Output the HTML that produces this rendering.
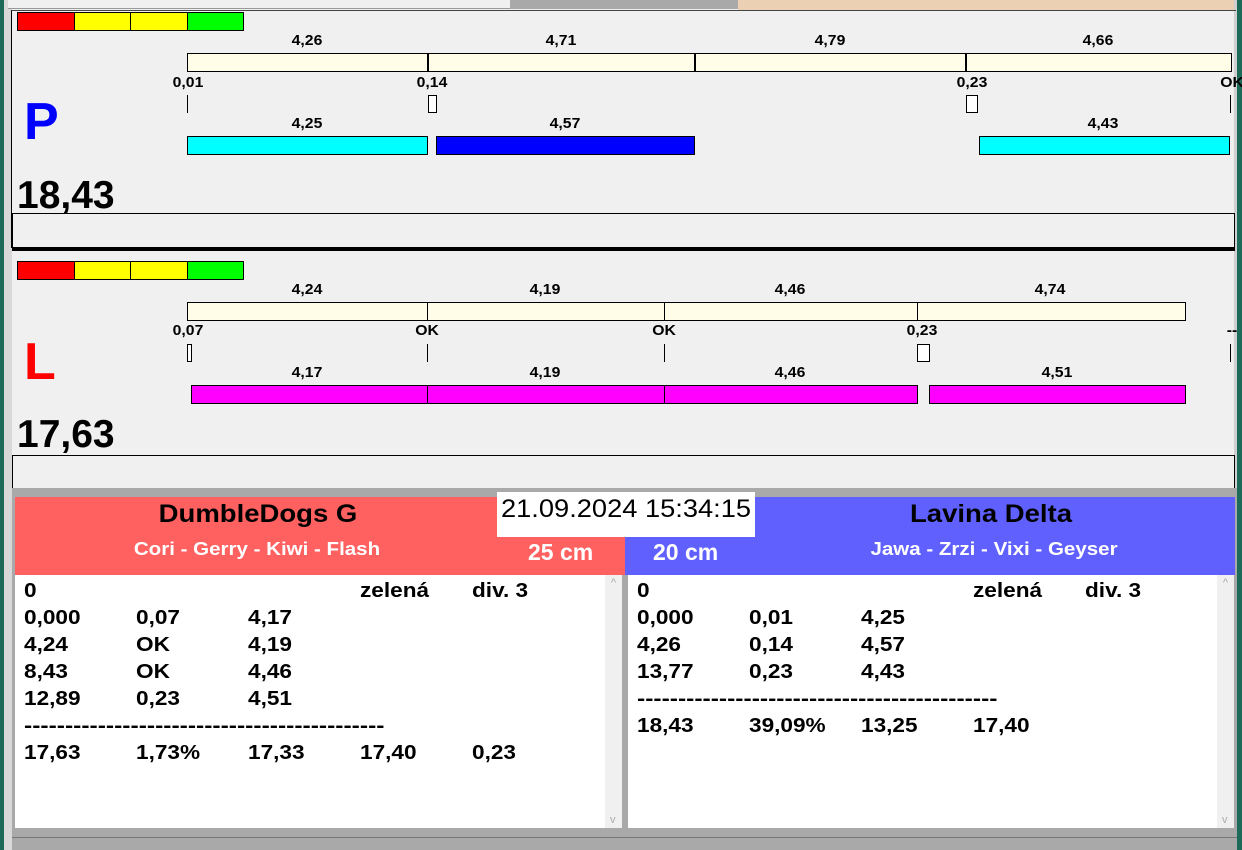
<!DOCTYPE html>
<html><head><meta charset="utf-8"><style>
*{margin:0;padding:0;box-sizing:border-box}
body{width:1242px;height:850px;overflow:hidden;background:#f0f0f0;position:relative;font-family:"Liberation Sans",Arial,sans-serif}
div{position:absolute}
.t{font-weight:bold;font-size:15px;line-height:18px;transform:translateX(-50%) scaleX(1.05);white-space:nowrap;color:#000}
.b{border:1px solid #000}
.r{font-weight:bold;font-size:20px;line-height:27px;white-space:nowrap;transform:scaleX(1.13);transform-origin:0 0}
.d{font-weight:bold;font-size:20px;line-height:27px;white-space:nowrap;transform:scaleX(1.23);transform-origin:0 0}
</style></head><body>
<!-- frame -->
<div style="left:0;top:0;width:4px;height:850px;background:#1e6a58"></div>
<div style="left:4px;top:0;width:8px;height:850px;background:#d8d8d8"></div>
<div style="left:1237px;top:0;width:5px;height:850px;background:#1e6a58"></div>
<div style="left:1234px;top:0;width:3px;height:850px;background:#d0d0d0"></div>
<!-- tabs -->
<div style="left:8px;top:0;width:730px;height:9px;background:#f0f0f0;border-bottom:1px solid #999"></div>
<div style="left:510px;top:0;width:228px;height:9px;background:#a9a9a9"></div>
<div style="left:738px;top:0;width:496px;height:11px;background:#ecd0b4"></div>
<!-- upper panel -->
<div style="left:11px;top:10px;width:1225px;height:238px;border-left:1px solid #000;border-top:1px solid #444"></div>
<div class="b" style="left:17px;top:12px;width:58px;height:19px;background:#f00"></div>
<div class="b" style="left:74px;top:12px;width:57px;height:19px;background:#ff0"></div>
<div class="b" style="left:130px;top:12px;width:58px;height:19px;background:#ff0"></div>
<div class="b" style="left:187px;top:12px;width:57px;height:19px;background:#0f0"></div>
<div class="t" style="left:307px;top:32px">4,26</div>
<div class="t" style="left:561px;top:32px">4,71</div>
<div class="t" style="left:830px;top:32px">4,79</div>
<div class="t" style="left:1098px;top:32px">4,66</div>
<div class="b" style="left:187px;top:53px;width:1045px;height:19px;background:#fffde8"></div>
<div style="left:427px;top:53px;width:2px;height:19px;background:#000"></div>
<div style="left:694px;top:53px;width:2px;height:19px;background:#000"></div>
<div style="left:965px;top:53px;width:2px;height:19px;background:#000"></div>
<div class="t" style="left:188px;top:74px">0,01</div>
<div class="t" style="left:432px;top:74px">0,14</div>
<div class="t" style="left:972px;top:74px">0,23</div>
<div class="t" style="left:1232px;top:74px">OK</div>
<div style="left:187px;top:95px;width:1px;height:18px;background:#000"></div>
<div class="b" style="left:428px;top:95px;width:9px;height:18px;background:#fff"></div>
<div class="b" style="left:966px;top:95px;width:12px;height:18px;background:#fff"></div>
<div style="left:1230px;top:95px;width:1px;height:18px;background:#000"></div>
<div class="t" style="left:307px;top:115px">4,25</div>
<div class="t" style="left:565px;top:115px">4,57</div>
<div class="t" style="left:1103px;top:115px">4,43</div>
<div class="b" style="left:187px;top:136px;width:241px;height:19px;background:#0ff"></div>
<div class="b" style="left:436px;top:136px;width:259px;height:19px;background:#00f"></div>
<div class="b" style="left:979px;top:136px;width:251px;height:19px;background:#0ff"></div>
<div style="left:24px;top:94px;font-size:52px;font-weight:bold;color:#0000ff;line-height:56px">P</div>
<div style="left:17px;top:174px;font-size:39px;font-weight:bold;line-height:44px">18,43</div>
<div style="left:12px;top:213px;width:1223px;height:35px;border:1px solid #000;border-bottom:none"></div>
<div style="left:12px;top:247px;width:1223px;height:4px;background:#000"></div>
<!-- lower panel -->
<div class="b" style="left:17px;top:261px;width:58px;height:19px;background:#f00"></div>
<div class="b" style="left:74px;top:261px;width:57px;height:19px;background:#ff0"></div>
<div class="b" style="left:130px;top:261px;width:58px;height:19px;background:#ff0"></div>
<div class="b" style="left:187px;top:261px;width:57px;height:19px;background:#0f0"></div>
<div class="t" style="left:307px;top:281px">4,24</div>
<div class="t" style="left:545px;top:281px">4,19</div>
<div class="t" style="left:790px;top:281px">4,46</div>
<div class="t" style="left:1050px;top:281px">4,74</div>
<div class="b" style="left:187px;top:302px;width:999px;height:19px;background:#fffde8"></div>
<div style="left:427px;top:302px;width:1px;height:19px;background:#000"></div>
<div style="left:664px;top:302px;width:1px;height:19px;background:#000"></div>
<div style="left:917px;top:302px;width:1px;height:19px;background:#000"></div>
<div class="t" style="left:188px;top:322px">0,07</div>
<div class="t" style="left:427px;top:322px">OK</div>
<div class="t" style="left:664px;top:322px">OK</div>
<div class="t" style="left:922px;top:322px">0,23</div>
<div class="t" style="left:1232px;top:322px">--</div>
<div class="b" style="left:187px;top:344px;width:5px;height:18px;background:#fff"></div>
<div style="left:427px;top:344px;width:1px;height:18px;background:#000"></div>
<div style="left:664px;top:344px;width:1px;height:18px;background:#000"></div>
<div class="b" style="left:917px;top:344px;width:13px;height:18px;background:#fff"></div>
<div style="left:1230px;top:344px;width:1px;height:18px;background:#000"></div>
<div class="t" style="left:307px;top:364px">4,17</div>
<div class="t" style="left:545px;top:364px">4,19</div>
<div class="t" style="left:790px;top:364px">4,46</div>
<div class="t" style="left:1057px;top:364px">4,51</div>
<div class="b" style="left:191px;top:385px;width:727px;height:19px;background:#f0f"></div>
<div style="left:427px;top:385px;width:1px;height:19px;background:#000"></div>
<div style="left:664px;top:385px;width:1px;height:19px;background:#000"></div>
<div class="b" style="left:929px;top:385px;width:257px;height:19px;background:#f0f"></div>
<div style="left:24px;top:334px;font-size:52px;font-weight:bold;color:#f00;line-height:56px">L</div>
<div style="left:17px;top:413px;font-size:39px;font-weight:bold;line-height:44px">17,63</div>
<div style="left:12px;top:455px;width:1223px;height:34px;border:1px solid #000;border-bottom:none"></div>
<!-- bottom -->
<div style="left:12px;top:488px;width:1225px;height:362px;background:#a9a9a9"></div>
<div style="left:15px;top:497px;width:610px;height:78px;background:#ff6060"></div>
<div style="left:625px;top:497px;width:610px;height:78px;background:#6060ff"></div>
<div style="left:497px;top:492px;width:258px;height:45px;background:#fff"></div>
<div style="left:501px;top:494px;font-size:25px;line-height:30px;transform:scaleX(1.09);transform-origin:0 0;white-space:nowrap">21.09.2024 15:34:15</div>
<div style="left:258px;top:500px;transform:translateX(-50%) scaleX(1.1);font-size:25px;font-weight:bold;white-space:nowrap">DumbleDogs G</div>
<div style="left:257px;top:539px;transform:translateX(-50%) scaleX(1.14);font-size:18px;font-weight:bold;color:#fff;white-space:nowrap">Cori - Gerry - Kiwi - Flash</div>
<div style="left:528px;top:539px;font-size:23px;font-weight:bold;color:#fff">25 cm</div>
<div style="left:653px;top:539px;font-size:23px;font-weight:bold;color:#fff">20 cm</div>
<div style="left:991px;top:500px;transform:translateX(-50%) scaleX(1.1);font-size:25px;font-weight:bold;white-space:nowrap">Lavina Delta</div>
<div style="left:994px;top:539px;transform:translateX(-50%) scaleX(1.14);font-size:18px;font-weight:bold;color:#fff;white-space:nowrap">Jawa - Zrzi - Vixi - Geyser</div>
<div style="left:15px;top:575px;width:590px;height:253px;background:#fff"></div>
<div style="left:605px;top:575px;width:17px;height:253px;background:#f0f0f0;color:#aaa;font-size:11px;text-align:center;padding-top:2px">^<div style="position:absolute;bottom:2px;left:5px">v</div></div>
<div style="left:628px;top:575px;width:589px;height:253px;background:#fff"></div>
<div style="left:1217px;top:575px;width:17px;height:253px;background:#f0f0f0;color:#aaa;font-size:11px;text-align:center;padding-top:2px">^<div style="position:absolute;bottom:2px;left:5px">v</div></div>
<div style="left:12px;top:837px;width:1225px;height:1px;background:#777"></div>
<!-- left list -->
<div class="r" style="left:24px;top:578px">0</div><div class="r" style="left:360px;top:578px">zelená</div><div class="r" style="left:472px;top:578px">div. 3</div>
<div class="r" style="left:24px;top:605px">0,000</div><div class="r" style="left:136px;top:605px">0,07</div><div class="r" style="left:248px;top:605px">4,17</div>
<div class="r" style="left:24px;top:632px">4,24</div><div class="r" style="left:136px;top:632px">OK</div><div class="r" style="left:248px;top:632px">4,19</div>
<div class="r" style="left:24px;top:659px">8,43</div><div class="r" style="left:136px;top:659px">OK</div><div class="r" style="left:248px;top:659px">4,46</div>
<div class="r" style="left:24px;top:686px">12,89</div><div class="r" style="left:136px;top:686px">0,23</div><div class="r" style="left:248px;top:686px">4,51</div>
<div class="d" style="left:24px;top:713px">--------------------------------------------</div>
<div class="r" style="left:24px;top:740px">17,63</div><div class="r" style="left:136px;top:740px">1,73%</div><div class="r" style="left:248px;top:740px">17,33</div><div class="r" style="left:360px;top:740px">17,40</div><div class="r" style="left:472px;top:740px">0,23</div>
<!-- right list -->
<div class="r" style="left:637px;top:578px">0</div><div class="r" style="left:973px;top:578px">zelená</div><div class="r" style="left:1085px;top:578px">div. 3</div>
<div class="r" style="left:637px;top:605px">0,000</div><div class="r" style="left:749px;top:605px">0,01</div><div class="r" style="left:861px;top:605px">4,25</div>
<div class="r" style="left:637px;top:632px">4,26</div><div class="r" style="left:749px;top:632px">0,14</div><div class="r" style="left:861px;top:632px">4,57</div>
<div class="r" style="left:637px;top:659px">13,77</div><div class="r" style="left:749px;top:659px">0,23</div><div class="r" style="left:861px;top:659px">4,43</div>
<div class="d" style="left:637px;top:686px">--------------------------------------------</div>
<div class="r" style="left:637px;top:713px">18,43</div><div class="r" style="left:749px;top:713px">39,09%</div><div class="r" style="left:861px;top:713px">13,25</div><div class="r" style="left:973px;top:713px">17,40</div>
</body></html>
